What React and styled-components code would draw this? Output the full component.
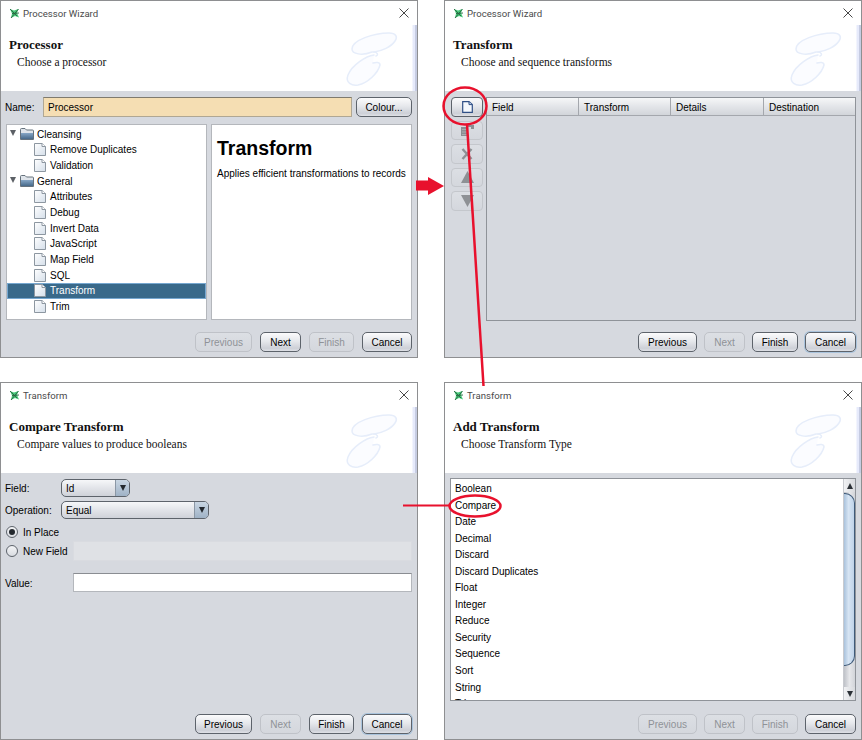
import React from "react";
import styled, { createGlobalStyle } from "styled-components";

const GlobalStyle = createGlobalStyle`
  html, body {
    margin: 0;
    padding: 0;
    background: #fff;
  }
  * {
    box-sizing: border-box;
  }
`;

function AppIcon() {
  return (
    <svg width="11" height="11" viewBox="0 0 11 11">
      <path d="M1 1 L5 2.5 L9.5 1 L8 5 L10 9.5 L6 8 L2 10 L3 5.5 Z" fill="#46c878" />
      <path d="M1 1 L8 8 M9.5 1 L2 10 M3 5.5 L10 5" stroke="#27613f" strokeWidth="0.9" fill="none" />
    </svg>
  );
}

function CloseIcon() {
  return (
    <svg width="10" height="10" viewBox="0 0 10 10">
      <path d="M0.5 0.5 L9.5 9.5 M9.5 0.5 L0.5 9.5" stroke="#333" strokeWidth="0.9" fill="none" />
    </svg>
  );
}

function Watermark() {
  return (
    <svg width="60" height="60" viewBox="0 0 60 60">
      <g fill="#fbfcff" stroke="#e6edfa" strokeWidth="1.5" strokeLinecap="round">
        <path d="M28 23 C18 27 8 25 8 20 C8 11 30 4 45 4 C52 4 54 8 51 12 C47 18 38 22 30 23 Z" />
        <path d="M30 26 C22 27 8 36 4 46 C1 54 8 57 14 56 C24 54 34 44 36 36 C36 33 32 33 29 34" />
        <path d="M30 23 C33 23 35 26 32 27" fill="none" />
      </g>
    </svg>
  );
}

function DocIcon() {
  return (
    <svg width="12" height="13" viewBox="0 0 12 13">
      <defs>
        <linearGradient id="docFill" x1="0" y1="0" x2="1" y2="1">
          <stop offset="0" stopColor="#ffffff" />
          <stop offset="1" stopColor="#d5dfea" />
        </linearGradient>
      </defs>
      <path d="M0.5 0.5 H8 L11.5 3.5 V12.5 H0.5 Z" fill="url(#docFill)" stroke="#8d97a1" />
      <path d="M8 0.5 V3.5 H11.5" fill="#fff" stroke="#8d97a1" />
    </svg>
  );
}

function FolderIcon() {
  return (
    <svg width="14" height="12" viewBox="0 0 14 12">
      <defs>
        <linearGradient id="folderFill" x1="0" y1="0" x2="0" y2="1">
          <stop offset="0" stopColor="#86a6c6" />
          <stop offset="1" stopColor="#47698a" />
        </linearGradient>
      </defs>
      <path d="M0.5 1.500 Q0.5 0.5 1.500 0.5 H5 L6.500 2 H12.500 Q13.500 2 13.500 3 V11.500 H0.500 Z" fill="#dfe4ea" stroke="#66727d" />
      <path d="M1 5 H13 V11 H1 Z" fill="url(#folderFill)" />
    </svg>
  );
}

function NewIcon() {
  return (
    <svg width="11" height="12" viewBox="0 0 11 12">
      <path d="M0.7 0.7 H7 L10.3 3.6 V11.3 H0.7 Z" fill="#f4f8fd" stroke="#2f4f86" strokeWidth="1.2" />
      <path d="M7 1 V3.600 H10" fill="#cfe0f5" stroke="#2f4f86" />
    </svg>
  );
}

function EditIcon() {
  return (
    <svg width="13" height="11" viewBox="0 0 13 11">
      <path d="M0 2 H7 V11 H0 Z" fill="#8b8e92" />
      <path d="M1 4.500 H6 M1 7 H6 M1 9.500 H6" stroke="#a9acb1" />
      <path d="M7 0 H13 V4 H10 V2 H7 Z" fill="#8b8e92" />
    </svg>
  );
}

function CrossIcon() {
  return (
    <svg width="12" height="12" viewBox="0 0 12 12">
      <path d="M1.500 1 L10.500 11 M10.500 1 L1.500 11" stroke="#8e9195" strokeWidth="2.4" />
    </svg>
  );
}

function UpIcon() {
  return (
    <svg width="13" height="12" viewBox="0 0 13 12">
      <path d="M6.500 0 L13 12 H0 Z" fill="#8e9195" />
    </svg>
  );
}

function DownIcon() {
  return (
    <svg width="13" height="12" viewBox="0 0 13 12">
      <path d="M0 0 H13 L6.500 12 Z" fill="#8e9195" />
    </svg>
  );
}

const Page = styled.div`
  position: relative;
  display: grid;
  grid-template-columns: 418px 418px;
  grid-template-rows: 358px 358px;
  column-gap: 26px;
  row-gap: 24px;
  width: 862px;
  height: 740px;
  font-family: "Liberation Sans", Arial, sans-serif;
  font-size: 10px;
  color: #000;
`;

const Overlay = styled.svg`
  position: absolute;
  left: 0;
  top: 0;
  pointer-events: none;
`;

const Frame = styled.section`
  display: flex;
  flex-direction: column;
  border: 1px solid #8e8f91;
  background: #d6d9df;
`;

const TitleBar = styled.div`
  display: flex;
  align-items: center;
  height: 24px;
  padding: 0 8px 0 8px;
  background: #fff;
`;

const TitleText = styled.span`
  flex: 1;
  margin-left: 3px;
  font-family: Roboto, sans-serif;
  font-size: 9.6px;
  color: #4a4a4a;
`;

const Heading = styled.header`
  position: relative;
  height: 66px;
  padding: 12px 0 0 8px;
  background: #fff;
  font-family: "Liberation Serif", "Times New Roman", serif;
  color: #111;

  &::after {
    content: "";
    position: absolute;
    right: 0;
    top: 0;
    bottom: 0;
    width: 5px;
    background: linear-gradient(to right, #fff 0, #e6eafb 20%, #e6eafb 55%, #c6cce2 60%, #c6cce2 100%);
  }
`;

const HeadTitle = styled.div`
  font-size: 13px;
  font-weight: bold;
  line-height: 16px;
`;

const HeadSub = styled.div`
  font-size: 11.5px;
  line-height: 18px;
  margin-left: 8px;
`;

const Mark = styled.div`
  position: absolute;
  left: 343px;
  top: 4px;
  line-height: 0;
`;

const Body = styled.div`
  flex: 1;
  display: flex;
  flex-direction: column;
`;

const Footer = styled.div`
  display: flex;
  justify-content: flex-end;
  gap: ${(p) => p.$gap || 8}px;
  margin-top: auto;
  padding: 0 5px 5px;
`;

const Button = styled.button`
  width: ${(p) => p.$w}px;
  height: 20px;
  padding: 1px 0 0;
  border: 1px solid ${(p) => (p.disabled ? "#bfc2c8" : "#5d636b")};
  border-radius: 5px;
  background: ${(p) =>
    p.disabled
      ? "linear-gradient(#dcdfe4, #d4d7dd)"
      : "linear-gradient(#fbfbfc, #e6e8ec 45%, #cdd0d7 85%, #dfe1e6)"};
  font-family: inherit;
  font-size: 10px;
  color: ${(p) => (p.disabled ? "#8f9297" : "#000")};
  box-shadow: ${(p) => (p.$def ? "0 0 0 1px #a9c3dc" : "none")};
`;

const NameRow = styled.div`
  display: flex;
  align-items: center;
  padding: 6px 5px 0 4px;
`;

const NameLabel = styled.label`
  width: 38px;
`;

const NameInput = styled.div`
  flex: 1;
  height: 20px;
  margin-right: 4px;
  padding: 0 4px;
  display: flex;
  align-items: center;
  background: #f5deb3;
  border: 1px solid #b0a793;
  border-top-color: #7f7a6e;
`;

const Panels = styled.div`
  display: grid;
  grid-template-columns: 1fr 1fr;
  gap: 4px;
  height: 196px;
  margin-top: 7px;
  padding: 0 5px;
`;

const Panel = styled.div`
  background: #fff;
  border: 1px solid #b4b7bc;
  overflow: hidden;
`;

const TreeRow = styled.div`
  position: relative;
  display: flex;
  align-items: center;
  gap: ${(p) => (p.$folder ? 3 : 4)}px;
  height: 15.67px;
  padding-left: ${(p) => (p.$folder ? 13 : 27)}px;
  background: ${(p) => (p.$on ? "#39698a" : "transparent")};
  outline: ${(p) => (p.$on ? "1px solid #76a7d0" : "none")};
  outline-offset: -1px;
  color: ${(p) => (p.$on ? "#fff" : "#000")};
`;

const Twist = styled.span`
  position: absolute;
  left: 3px;
  top: 4px;
  border-left: 3px solid transparent;
  border-right: 3px solid transparent;
  border-top: 6px solid #5c6066;
`;

const Tree = styled.div`
  padding-top: 1.4px;
`;

const InfoPanel = styled(Panel)`
  padding: 0 5px;
`;

const InfoTitle = styled.h2`
  margin: 13px 0 0;
  font-size: 19.5px;
  line-height: 20px;
  font-weight: bold;
  color: #000;
`;

const InfoText = styled.p`
  margin: 9px 0 0;
  font-size: 10px;
  line-height: 14px;
  white-space: nowrap;
`;

const TableArea = styled.div`
  display: flex;
  gap: 3px;
  padding: 6px 5px 0 6px;
`;

const Tools = styled.div`
  display: flex;
  flex-direction: column;
  gap: 4px;
  width: 32px;
`;

const ToolButton = styled.button`
  display: flex;
  align-items: center;
  justify-content: center;
  width: 32px;
  height: 19.5px;
  padding: 0;
  border: 1px solid ${(p) => (p.disabled ? "#c4c7cc" : "#5d636b")};
  border-radius: 4px;
  background: ${(p) =>
    p.disabled
      ? "linear-gradient(#dcdfe4, #d4d7dd)"
      : "linear-gradient(#fbfbfc, #e6e8ec 45%, #cdd0d7 85%, #dfe1e6)"};
  overflow: hidden;
`;

const Table = styled.div`
  flex: 1;
  height: 224px;
  border: 1px solid #8f9399;
`;

const TableHead = styled.div`
  display: grid;
  grid-template-columns: 92px 92px 93px 1fr;
  height: 18px;
  border-bottom: 1px solid #a4a7ad;
  background: linear-gradient(#f6f7f8, #e3e5e9 50%, #d2d5da);
`;

const HeadCell = styled.div`
  display: flex;
  align-items: center;
  padding: 1px 0 0 5px;
  border-right: 1px solid #a4a7ad;

  &:last-child {
    border-right: 0;
  }
`;

const Form = styled.div`
  display: flex;
  flex-direction: column;
  padding: 6px 5px 0 4px;
`;

const FormRow = styled.div`
  display: flex;
  align-items: center;
  height: ${(p) => p.$h}px;
  margin-top: ${(p) => p.$top || 0}px;
`;

const FormLabel = styled.label`
  width: ${(p) => p.$w}px;
  flex: none;
  padding-top: 1px;
`;

const Combo = styled.div`
  display: flex;
  align-items: stretch;
  width: ${(p) => p.$w}px;
  height: 18px;
  border: 1px solid #5d636b;
  border-radius: 5px;
  overflow: hidden;
  background: linear-gradient(#f6f7f9, #e2e4e9 50%, #cfd2d9);
`;

const ComboText = styled.span`
  flex: 1;
  display: flex;
  align-items: center;
  padding-left: 4px;
`;

const ComboArrow = styled.span`
  display: flex;
  align-items: center;
  justify-content: center;
  width: 14px;
  background: linear-gradient(#c9d6e3, #9fb2c6);
  border-left: 1px solid #8b97a5;

  &::after {
    content: "";
    border-left: 3.5px solid transparent;
    border-right: 3.5px solid transparent;
    border-top: 6px solid #23282e;
  }
`;

const Radio = styled.span`
  display: flex;
  align-items: center;
  justify-content: center;
  width: 12px;
  height: 12px;
  margin: 0 5px 0 1px;
  border: 1px solid #5d636b;
  border-radius: 50%;
  background: linear-gradient(#f3f4f6, #d9dce1);
  flex: none;

  &::after {
    content: "";
    display: ${(p) => (p.$on ? "block" : "none")};
    width: 6px;
    height: 6px;
    border-radius: 50%;
    background: #23282e;
  }
`;

const RadioLabel = styled.span`
  width: ${(p) => p.$w}px;
  flex: none;
`;

const TextBox = styled.div`
  flex: 1;
  height: 100%;
  background: ${(p) => (p.$off ? "#dfe1e5" : "#fff")};
  border: 1px solid ${(p) => (p.$off ? "#d9dbe0" : "#b4b7bc")};
  border-top-color: ${(p) => (p.$off ? "#d9dbe0" : "#8a8d92")};
`;

const ListWrap = styled.div`
  padding: 5px 5px 0;
`;

const ListBox = styled.div`
  display: flex;
  height: 223px;
  background: #fff;
  border: 1px solid #8f9399;
`;

const ListItems = styled.div`
  flex: 1;
  padding: 2px 0 0 4px;
  overflow: hidden;
`;

const ListItem = styled.div`
  height: 16.55px;
  line-height: 16.55px;
`;

const ScrollBar = styled.div`
  display: flex;
  flex-direction: column;
  width: 12px;
  border-left: 1px solid #c8cacf;
  background: linear-gradient(to right, #bfc2c8, #e6e7ea 50%, #d2d4d9);
`;

const ScrollEnd = styled.div`
  display: flex;
  align-items: center;
  justify-content: center;
  height: 13px;
  flex: none;
  background: linear-gradient(to right, #f0f1f3, #d8dade);

  &::after {
    content: "";
    border-left: 3.5px solid transparent;
    border-right: 3.5px solid transparent;
    ${(p) => (p.$up ? "border-bottom" : "border-top")}: 6px solid #2b3036;
  }
`;

const ScrollThumb = styled.div`
  height: 173px;
  margin-top: 1px;
  border: 1px solid #3f5a78;
  border-left: 0;
  border-radius: 0 10px 10px 0;
  background: linear-gradient(to right, #a9c2dc, #d6e4f3 45%, #bfd3e9);
`;

const ScrollFill = styled.div`
  flex: 1;
`;

function Wizard({ title, heading, sub, children }) {
  return (
    <Frame>
      <TitleBar>
        <AppIcon />
        <TitleText>{title}</TitleText>
        <CloseIcon />
      </TitleBar>
      <Heading>
        <HeadTitle>{heading}</HeadTitle>
        <HeadSub>{sub}</HeadSub>
        <Mark>
          <Watermark />
        </Mark>
      </Heading>
      <Body>{children}</Body>
    </Frame>
  );
}

const cleansing = ["Remove Duplicates", "Validation"];
const general = ["Attributes", "Debug", "Invert Data", "JavaScript", "Map Field", "SQL", "Transform", "Trim"];
const transforms = [
  "Boolean",
  "Compare",
  "Date",
  "Decimal",
  "Discard",
  "Discard Duplicates",
  "Float",
  "Integer",
  "Reduce",
  "Security",
  "Sequence",
  "Sort",
  "String",
  "Trim",
];

function Leaf({ name }) {
  return (
    <TreeRow $on={name === "Transform"}>
      <DocIcon />
      {name}
    </TreeRow>
  );
}

function Branch({ name }) {
  return (
    <TreeRow $folder>
      <Twist />
      <FolderIcon />
      {name}
    </TreeRow>
  );
}

export default function App() {
  return (
    <Page>
      <GlobalStyle />

      <Wizard title="Processor Wizard" heading="Processor" sub="Choose a processor">
        <NameRow>
          <NameLabel>Name:</NameLabel>
          <NameInput>Processor</NameInput>
          <Button $w={56}>Colour...</Button>
        </NameRow>
        <Panels>
          <Panel>
            <Tree>
              <Branch name="Cleansing" />
              {cleansing.map((n) => (
                <Leaf key={n} name={n} />
              ))}
              <Branch name="General" />
              {general.map((n) => (
                <Leaf key={n} name={n} />
              ))}
            </Tree>
          </Panel>
          <InfoPanel>
            <InfoTitle>Transform</InfoTitle>
            <InfoText>Applies efficient transformations to records</InfoText>
          </InfoPanel>
        </Panels>
        <Footer>
          <Button $w={57} disabled>Previous</Button>
          <Button $w={41}>Next</Button>
          <Button $w={45} disabled>Finish</Button>
          <Button $w={50}>Cancel</Button>
        </Footer>
      </Wizard>

      <Wizard title="Processor Wizard" heading="Transform" sub="Choose and sequence transforms">
        <TableArea>
          <Tools>
            <ToolButton><NewIcon /></ToolButton>
            <ToolButton disabled><EditIcon /></ToolButton>
            <ToolButton disabled><CrossIcon /></ToolButton>
            <ToolButton disabled><UpIcon /></ToolButton>
            <ToolButton disabled><DownIcon /></ToolButton>
          </Tools>
          <Table>
            <TableHead>
              <HeadCell>Field</HeadCell>
              <HeadCell>Transform</HeadCell>
              <HeadCell>Details</HeadCell>
              <HeadCell>Destination</HeadCell>
            </TableHead>
          </Table>
        </TableArea>
        <Footer $gap={7}>
          <Button $w={59}>Previous</Button>
          <Button $w={41} disabled>Next</Button>
          <Button $w={46}>Finish</Button>
          <Button $w={51} $def>Cancel</Button>
        </Footer>
      </Wizard>

      <Wizard title="Transform" heading="Compare Transform" sub="Compare values to produce booleans">
        <Form>
          <FormRow $h={18}>
            <FormLabel $w={56}>Field:</FormLabel>
            <Combo $w={69}>
              <ComboText>Id</ComboText>
              <ComboArrow />
            </Combo>
          </FormRow>
          <FormRow $h={18} $top={4}>
            <FormLabel $w={56}>Operation:</FormLabel>
            <Combo $w={148}>
              <ComboText>Equal</ComboText>
              <ComboArrow />
            </Combo>
          </FormRow>
          <FormRow $h={14} $top={6}>
            <Radio $on />
            In Place
          </FormRow>
          <FormRow $h={20} $top={2}>
            <Radio />
            <RadioLabel $w={50}>New Field</RadioLabel>
            <TextBox $off />
          </FormRow>
          <FormRow $h={19} $top={12}>
            <FormLabel $w={68}>Value:</FormLabel>
            <TextBox />
          </FormRow>
        </Form>
        <Footer>
          <Button $w={57}>Previous</Button>
          <Button $w={41} disabled>Next</Button>
          <Button $w={45}>Finish</Button>
          <Button $w={50} $def>Cancel</Button>
        </Footer>
      </Wizard>

      <Wizard title="Transform" heading="Add Transform" sub="Choose Transform Type">
        <ListWrap>
          <ListBox>
            <ListItems>
              {transforms.map((t) => (
                <ListItem key={t}>{t}</ListItem>
              ))}
            </ListItems>
            <ScrollBar>
              <ScrollEnd $up />
              <ScrollThumb />
              <ScrollFill />
              <ScrollEnd />
            </ScrollBar>
          </ListBox>
        </ListWrap>
        <Footer $gap={7}>
          <Button $w={59} disabled>Previous</Button>
          <Button $w={41} disabled>Next</Button>
          <Button $w={46} disabled>Finish</Button>
          <Button $w={51}>Cancel</Button>
        </Footer>
      </Wizard>

      <Overlay width="862" height="740" viewBox="0 0 862 740">
        <g fill="none" stroke="#e8112d" strokeWidth="2.5">
          <ellipse cx="465" cy="106" rx="21.5" ry="18.5" />
          <path d="M467 124 L483.500 386" />
          <ellipse cx="475" cy="506" rx="25.500" ry="10.500" />
          <path d="M403 505.500 H449" strokeWidth="2" />
        </g>
        <path d="M416 180.500 H428 V177 L444 186 L428 195 V190.500 H416 Z" fill="#e8112d" />
      </Overlay>
    </Page>
  );
}
